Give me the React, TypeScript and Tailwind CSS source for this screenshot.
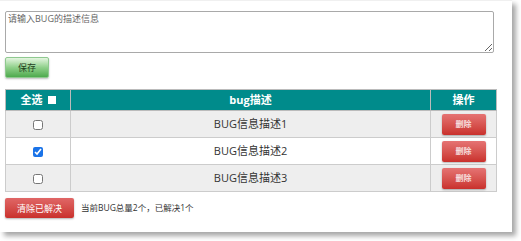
import { useState } from "react";

type Bug = { id: number; desc: string; done: boolean };

const initial: Bug[] = [
  { id: 1, desc: "BUG信息描述1", done: false },
  { id: 2, desc: "BUG信息描述2", done: true },
  { id: 3, desc: "BUG信息描述3", done: false },
];

export default function App() {
  const [bugs, setBugs] = useState<Bug[]>(initial);
  const [text, setText] = useState("");

  const toggle = (id: number) =>
    setBugs((bs) => bs.map((b) => (b.id === id ? { ...b, done: !b.done } : b)));

  return (
    <div className="w-[521px] h-[241px] bg-white font-['Open_Sans','Noto_Sans_CJK_SC',sans-serif]">
      <div className="w-[512px] h-[232px] bg-white shadow-[4px_4px_5px_rgba(0,0,0,0.35)] border-t border-[#f0f0f0] px-[5px] pt-[10px]">
        <textarea
          value={text}
          onChange={(e) => setText(e.target.value)}
          placeholder="请输入BUG的描述信息"
          className="block w-[489px] h-[42px] border border-[#a9a9a9] rounded-[2px] px-[2px] py-0 text-[9px] leading-[14px] text-[#333] placeholder:text-[#666] outline-none"
        />
        <button className="mt-[3px] w-[44px] h-[21px] rounded-[2px] border border-[#8fc98f] bg-gradient-to-b from-[#e4f5e0] via-[#8fd08a] to-[#4daa4d] text-[9px] text-[#1f3f1f] shadow-[0_1px_2px_rgba(0,0,0,0.25)]">
          保存
        </button>

        <table className="mt-[11px] w-[492px] border-collapse text-[11px] text-[#333]">
          <thead>
            <tr className="h-[21px] bg-[#008b8b] text-white text-[11px] font-bold">
              <th className="w-[65px] border border-[#bbb] p-0">
                <span className="inline-flex items-center gap-[5px]">
                  全选
                  <span className="inline-block w-[8px] h-[8px] bg-white" />
                </span>
              </th>
              <th className="border border-[#bbb] p-0">bug描述</th>
              <th className="w-[66px] border border-[#bbb] p-0">操作</th>
            </tr>
          </thead>
          <tbody>
            {bugs.map((b, i) => (
              <tr key={b.id} className={i % 2 === 0 ? "h-[27px] bg-[#eeeeee]" : "h-[27px] bg-white"}>
                <td className="border border-[#ccc] text-center p-0">
                  <input
                    type="checkbox"
                    checked={b.done}
                    onChange={() => toggle(b.id)}
                    className="w-[10px] h-[10px] align-middle accent-[#1a73e8]"
                  />
                </td>
                <td className="border border-[#ccc] text-center p-0">{b.desc}</td>
                <td className="border border-[#ccc] text-center p-0">
                  <button
                    onClick={() => setBugs((bs) => bs.filter((x) => x.id !== b.id))}
                    className="w-[44px] h-[21px] rounded-[2px] bg-gradient-to-b from-[#e57373] to-[#c9302c] text-[8px] font-bold text-[#f7e0e0] shadow-[0_1px_2px_rgba(0,0,0,0.3)]"
                  >
                    删除
                  </button>
                </td>
              </tr>
            ))}
          </tbody>
        </table>

        <div className="mt-[6px] flex items-center gap-[7px]">
          <button className="w-[69px] h-[20px] rounded-[2px] bg-gradient-to-b from-[#e06666] to-[#c9302c] text-[9px] text-white shadow-[0_1px_2px_rgba(0,0,0,0.3)]">
            清除已解决
          </button>
          <span className="text-[8.5px] text-[#333]">当前BUG总量2个，已解决1个</span>
        </div>
      </div>
    </div>
  );
}
